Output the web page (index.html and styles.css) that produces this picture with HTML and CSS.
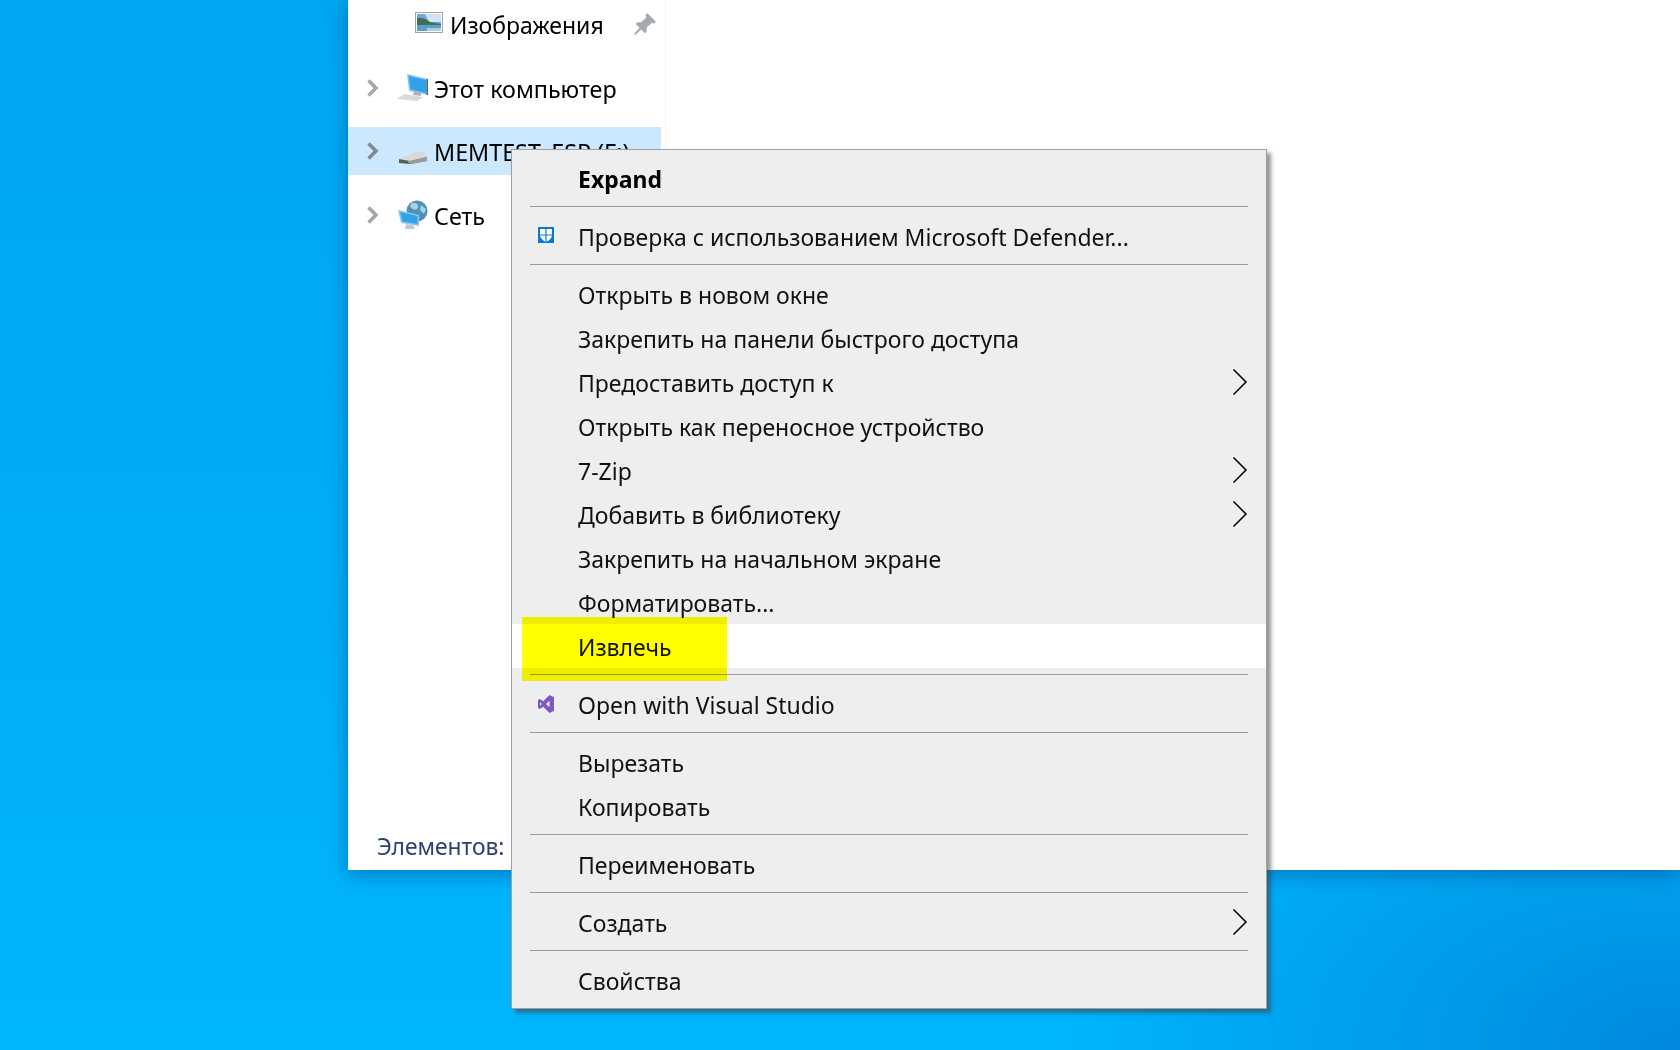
FILE: index.html
```html
<!DOCTYPE html>
<html lang="ru">
<head>
<meta charset="utf-8">
<title>Извлечь</title>
<link rel="stylesheet" href="styles.css">
</head>
<body>

<!-- explorer window behind the menu -->
<div class="window">
  <div class="nav">
    <div class="navRow navRowQuick">
      <svg class="navIcon" width="30" height="24" viewBox="0 0 30 24">
        <rect x="0.500" y="0.500" width="27" height="20" fill="#fff" stroke="#a3a3a3"/>
        <rect x="2" y="2" width="24" height="17" fill="#6fa9e4"/>
        <path d="M10 2 H26 V10 H14 Z" fill="#cfe3f5"/>
        <path d="M2 6 C7 5 11 7 15 10 L26 12 V13 H2 Z" fill="#3f6f52"/>
        <rect x="2" y="13" width="24" height="6" fill="#5d9cc9"/>
        <rect x="12" y="16" width="14" height="3" fill="#a9cfe3"/>
      </svg>
      <span>Изображения</span>
      <svg class="pin" width="24" height="24" viewBox="0 0 22 22">
        <path d="M13 1 L21 9 L19 10.500 L17 10 L12.500 14.500 L12.500 18 L11 19.500 L7.500 16 L2 21 L1 20 L6 14.500 L2.500 11 L4 9.500 L7.500 9.500 L12 5 L11.500 3 Z" fill="#a5aab0"/>
      </svg>
    </div>

    <div class="navRow">
      <svg class="chev" width="14" height="20" viewBox="0 0 14 20"><path d="M2.500 2.500 L10 10 L2.500 17.500" fill="none" stroke="#a6a6a6" stroke-width="3.500"/></svg>
      <svg class="navIcon" width="32" height="30" viewBox="0 0 32 30">
        <path d="M11 1 L32 6 V22 L13 18 Z" fill="#8fc6ee"/>
        <path d="M12.500 3 L30 7 V20 L14.500 16.500 Z" fill="#2fa2ec"/>
        <path d="M30.500 6 L32 6 V22 L30.500 22 Z" fill="#55606a"/>
        <path d="M18 18 L25 20 L25 23 L17 22 Z" fill="#aeb5ba"/>
        <path d="M8 21 L27 24 L21 28 L1 26 Z" fill="#d6d9dc"/>
      </svg>
      <span>Этот компьютер</span>
    </div>

    <div class="navRow navRowSel">
      <svg class="chev" width="14" height="20" viewBox="0 0 14 20"><path d="M2.500 2.500 L10 10 L2.500 17.500" fill="none" stroke="#7d8a96" stroke-width="3.500"/></svg>
      <svg class="navIcon" width="32" height="30" viewBox="0 0 32 30">
        <path d="M3 23 L20 16 L28 16 L31 21 L14 25 Z" fill="#d9d9d9"/>
        <path d="M3 23 L14 25 L31 21 V25 L14 28 L3 27 Z" fill="#5c5c5c"/>
        <path d="M14 25 L31 21 V25 L14 28 Z" fill="#9c9c9c"/>
        <rect x="12" y="25" width="2" height="2" fill="#4ec34e"/>
      </svg>
      <span>MEMTEST_ESP (F:)</span>
    </div>

    <div class="navRow">
      <svg class="chev" width="14" height="20" viewBox="0 0 14 20"><path d="M2.500 2.500 L10 10 L2.500 17.500" fill="none" stroke="#a6a6a6" stroke-width="3.500"/></svg>
      <svg class="navIcon" width="32" height="30" viewBox="0 0 32 30">
        <circle cx="21" cy="11" r="10.500" fill="#4f92b8"/>
        <path d="M16 3 C21 2 24 6 21 9 C18 11 15 8 14 6 Z" fill="#a9d0e4"/>
        <path d="M25 5 L30 9 L28 14 L24 10 Z" fill="#a9d0e4"/>
        <path d="M2 10 L23 15 V26 L5 23 Z" fill="#8fc6ee"/>
        <path d="M4 12 L21.500 16 V24 L6.500 21.500 Z" fill="#2fa2ec"/>
        <path d="M10 24 L17 25 L19 29 L9 29 Z" fill="#c3c8cc"/>
      </svg>
      <span>Сеть</span>
    </div>
  </div>
  <p class="status">Элементов:</p>
</div>

<!-- context menu -->
<div class="menu">
  <div class="item bold">Expand</div>
  <div class="sep"></div>
  <div class="item">
    <svg class="itemIcon" width="16" height="16" viewBox="0 0 16 16">
      <rect width="16" height="16" fill="#0a78d7"/>
      <path d="M2 2 H14 V8 C14 11 11 13.500 8 15 C5 13.500 2 11 2 8 Z" fill="#fff"/>
      <path d="M7.400 2 H8.600 V15 H7.400 Z M2 7.400 H14 V8.600 H2 Z" fill="#0a78d7"/>
    </svg>
    <span>Проверка с использованием Microsoft Defender...</span>
  </div>
  <div class="sep"></div>
  <div class="item">Открыть в новом окне</div>
  <div class="item">Закрепить на панели быстрого доступа</div>
  <div class="item">Предоставить доступ к<svg class="arrow" width="16" height="28" viewBox="0 0 16 28"><path d="M1.500 1.500 L14 14 L1.500 26.500" fill="none" stroke="#000" stroke-width="1.500"/></svg></div>
  <div class="item">Открыть как переносное устройство</div>
  <div class="item">7-Zip<svg class="arrow" width="16" height="28" viewBox="0 0 16 28"><path d="M1.500 1.500 L14 14 L1.500 26.500" fill="none" stroke="#000" stroke-width="1.500"/></svg></div>
  <div class="item">Добавить в библиотеку<svg class="arrow" width="16" height="28" viewBox="0 0 16 28"><path d="M1.500 1.500 L14 14 L1.500 26.500" fill="none" stroke="#000" stroke-width="1.500"/></svg></div>
  <div class="item">Закрепить на начальном экране</div>
  <div class="item">Форматировать...</div>
  <div class="item itemHover">Извлечь<span class="marker"></span></div>
  <div class="sep"></div>
  <div class="item">
    <svg class="itemIcon" width="16" height="18" viewBox="0 0 16 18">
      <path d="M11.500 0 L16 2.200 V15.800 L11.500 18 L5.200 11.800 L1.800 14 L0 13 V5 L1.800 4 L5.200 6.200 Z M11.500 5.800 L8 9 L11.500 12.200 Z M2 7.200 V10.800 L3.800 9 Z" fill="#7e57c2" fill-rule="evenodd"/>
    </svg>
    <span>Open with Visual Studio</span>
  </div>
  <div class="sep"></div>
  <div class="item">Вырезать</div>
  <div class="item">Копировать</div>
  <div class="sep"></div>
  <div class="item">Переименовать</div>
  <div class="sep"></div>
  <div class="item">Создать<svg class="arrow" width="16" height="28" viewBox="0 0 16 28"><path d="M1.500 1.500 L14 14 L1.500 26.500" fill="none" stroke="#000" stroke-width="1.500"/></svg></div>
  <div class="sep"></div>
  <div class="item">Свойства</div>
</div>

</body>
</html>
```

FILE: styles.css
```css
html, body {
  margin: 0;
  height: 100%;
}

body {
  position: relative;
  width: 1680px;
  height: 1050px;
  overflow: hidden;
  font-family: "Noto Sans", "Open Sans", sans-serif;
  color: #000;
  background-color: #00b4fb;
  background-image:
    radial-gradient(ellipse 620px 340px at 1680px 1050px, #0088dd, rgba(0, 136, 221, 0)),
    linear-gradient(180deg, #00a6f0 0%, #00aef8 60%, #00b6fd 100%);
}

/* explorer window */
.window {
  position: relative;
  margin-left: 348px;
  width: 1332px;
  height: 870px;
  background-color: #fff;
  box-shadow: 0 4px 18px rgba(0, 50, 110, 0.45);
}

.nav {
  width: 317px;
  height: 100%;
  border-right: 1px solid #f2f2f2;
  display: flex;
  flex-direction: column;
  gap: 15.5px;
}

.navRow {
  display: flex;
  align-items: center;
  height: 48px;
  width: 313px;
  font-size: 23.3px;
  padding-left: 18px;
  box-sizing: border-box;
}

.navRow span {
  padding-top: 2px;
}

.navRowQuick {
  padding-left: 67px;
  font-size: 23px;
}

.navRowSel {
  background-color: #cce8ff;
}

.chev {
  flex: none;
  margin-right: 16px;
}

.navIcon {
  flex: none;
  margin-right: 6px;
}

.navRowQuick .navIcon {
  margin-right: 5px;
}

.pin {
  margin-left: auto;
  margin-right: 4px;
}

.status {
  position: absolute;
  left: 29px;
  top: 831px;
  margin: 0;
  font-size: 22.8px;
  line-height: 32px;
  color: #2a4272;
}

/* context menu */
.menu {
  position: absolute;
  left: 511px;
  top: 149px;
  width: 756px;
  box-sizing: border-box;
  padding: 6px 0;
  background-color: #eeeeee;
  border: 1px solid #a0a0a0;
  box-shadow: 4px 4px 4px rgba(60, 60, 60, 0.55);
  font-size: 23px;
  color: #111;
}

.item {
  position: relative;
  display: flex;
  align-items: center;
  box-sizing: border-box;
  height: 44px;
  padding: 2px 18px 0 66px;
}

.bold {
  font-weight: 700;
  color: #000;
}

.itemIcon {
  position: absolute;
  left: 26px;
  top: 13px;
}

.arrow {
  margin-left: auto;
  margin-top: -2px;
}

.itemHover {
  background-color: #fff;
}

/* yellow marker drawn over the screenshot */
.marker {
  position: absolute;
  left: 10px;
  top: -7px;
  width: 205px;
  height: 64px;
  background-color: #ffff00;
  mix-blend-mode: multiply;
}

.sep {
  height: 1px;
  margin: 6px 18px 7px;
  background-color: #9c9c9c;
}
```
